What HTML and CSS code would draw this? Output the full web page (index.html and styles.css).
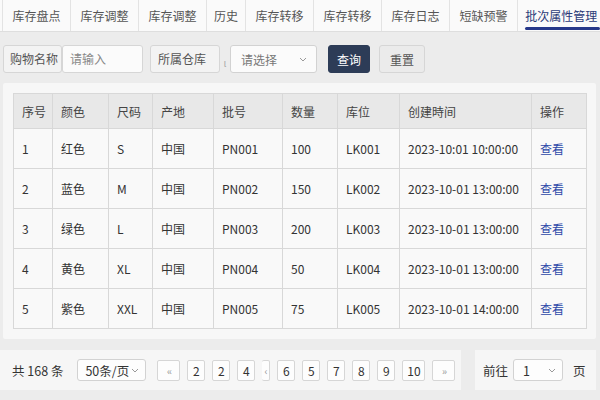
FILE: index.html
```html
<!DOCTYPE html>
<html lang="zh">
<head>
<meta charset="utf-8">
<title>批次属性管理</title>
<link rel="stylesheet" href="styles.css">
</head>
<body>
<div class="tabs">
  <div class="tab">库存盘点</div>
  <div class="tab">库存调整</div>
  <div class="tab">库存调整</div>
  <div class="tab tab-short">历史</div>
  <div class="tab">库存转移</div>
  <div class="tab">库存转移</div>
  <div class="tab">库存日志</div>
  <div class="tab">短缺预警</div>
  <div class="tab tab-active">批次属性管理</div>
</div>

<div class="filters">
  <div class="label label-name">购物名称</div>
  <div class="input">请输入</div>
  <div class="label label-wh">所属仓库</div>
  <span class="tick">ι</span>
  <div class="select select-wh">请选择<svg class="chev" width="8" height="5" viewBox="0 0 8 5"><path d="M1 1l3 3 3-3" fill="none" stroke="#999" stroke-width="1"/></svg></div>
  <button class="btn btn-primary">查询</button>
  <button class="btn btn-plain">重置</button>
</div>

<div class="card">
  <table class="grid">
    <colgroup>
      <col style="width:39px"><col style="width:56px"><col style="width:44px"><col style="width:61px"><col style="width:69px"><col style="width:55px"><col style="width:62px"><col style="width:132px"><col style="width:55px">
    </colgroup>
    <thead>
      <tr><th>序号</th><th>颜色</th><th>尺码</th><th>产地</th><th>批号</th><th>数量</th><th>库位</th><th>创建時间</th><th>操作</th></tr>
    </thead>
    <tbody>
      <tr><td>1</td><td>红色</td><td>S</td><td>中国</td><td>PN001</td><td>100</td><td>LK001</td><td>2023-10:01 10:00:00</td><td><a class="link">查看</a></td></tr>
      <tr><td>2</td><td>蓝色</td><td>M</td><td>中国</td><td>PN002</td><td>150</td><td>LK002</td><td>2023-10-01 13:00:00</td><td><a class="link">查看</a></td></tr>
      <tr><td>3</td><td>绿色</td><td>L</td><td>中国</td><td>PN003</td><td>200</td><td>LK003</td><td>2023-10-01 13:00:00</td><td><a class="link">查看</a></td></tr>
      <tr><td>4</td><td>黄色</td><td>XL</td><td>中国</td><td>PN004</td><td>50</td><td>LK004</td><td>2023-10-01 13:00:00</td><td><a class="link">查看</a></td></tr>
      <tr><td>5</td><td>紫色</td><td>XXL</td><td>中国</td><td>PN005</td><td>75</td><td>LK005</td><td>2023-10-01 14:00:00</td><td><a class="link">查看</a></td></tr>
    </tbody>
  </table>
</div>

<div class="pager">
  <div class="pager-main">
    <span class="total">共 168 条</span>
    <div class="select select-size">50条/页<svg class="chev" width="8" height="5" viewBox="0 0 8 5"><path d="M1 1l3 3 3-3" fill="none" stroke="#999" stroke-width="1"/></svg></div>
    <div class="pages">
      <span class="pg pg-wide pg-arrow">‹‹</span>
      <span class="pg">2</span>
      <span class="pg">2</span>
      <span class="pg">4</span>
      <span class="pg pg-narrow">‹</span>
      <span class="pg">6</span>
      <span class="pg">5</span>
      <span class="pg">7</span>
      <span class="pg">8</span>
      <span class="pg">9</span>
      <span class="pg pg-wide">10</span>
      <span class="pg pg-wide pg-arrow">››</span>
    </div>
  </div>
  <div class="pager-jump">
    <span>前往</span>
    <div class="select select-page">1<svg class="chev" width="8" height="5" viewBox="0 0 8 5"><path d="M1 1l3 3 3-3" fill="none" stroke="#999" stroke-width="1"/></svg></div>
    <span>页</span>
  </div>
</div>
</body>
</html>
```

FILE: styles.css
```css
* { box-sizing: border-box; }
html, body { margin: 0; padding: 0; }
body {
  width: 600px;
  height: 400px;
  overflow: hidden;
  background: #ececec;
  font-family: "Noto Sans CJK SC", "Noto Sans", sans-serif;
  font-size: 12px;
  color: #333;
}

/* tabs */
.tabs {
  display: flex;
  height: 32px;
  background: #fafafa;
  border-bottom: 1px solid #dedede;
  padding-left: 2px;
}
.tab {
  position: relative;
  padding: 0 9.5px;
  line-height: 31px;
  border-right: 1px solid #e3e3e3;
  color: #555;
  white-space: nowrap;
}
.tab:first-child { border-left: 1px solid #e3e3e3; }
.tab-short { padding: 0 7px; }
.tab-active {
  padding: 0 5px 0 7px;
  color: #2b3a78;
  border-right: none;
}
.tab-active::after {
  content: "";
  position: absolute;
  left: 7px;
  right: 2px;
  bottom: 1px;
  height: 3px;
  border-radius: 2px;
  background: #26388a;
}

/* filters */
.filters {
  display: flex;
  align-items: center;
  height: 28px;
  margin-top: 13px;
  padding-left: 3px;
}
.label {
  height: 28px;
  line-height: 26px;
  background: #f3f3f3;
  border: 1px solid #d6d6d6;
  border-radius: 3px;
  color: #555;
}
.label-name { width: 59px; padding-left: 6px; }
.label-wh { width: 70px; padding-left: 7px; margin-left: 7px; }
.input {
  width: 81px;
  height: 28px;
  line-height: 26px;
  padding-left: 7px;
  background: #fbfbfb;
  border: 1px solid #d6d6d6;
  border-radius: 3px;
  color: #888;
}
.tick {
  width: 10px;
  text-align: center;
  font-size: 10px;
  color: #aaa;
  padding-top: 6px;
}
.select {
  display: flex;
  align-items: center;
  justify-content: space-between;
  background: #fbfbfb;
  border: 1px solid #d2d2d2;
  border-radius: 3px;
}
.select-wh {
  width: 87px;
  height: 28px;
  padding: 0 9px 0 10px;
  color: #777;
}
.chev { display: block; }
.btn {
  height: 28px;
  border-radius: 3px;
  font-family: inherit;
  font-size: 12px;
  padding: 0;
}
.btn-primary {
  width: 42px;
  margin-left: 11px;
  background: #2d3c57;
  border: 1px solid #2d3c57;
  color: #fff;
}
.btn-plain {
  width: 46px;
  margin-left: 9px;
  background: #ebebeb;
  border: 1px solid #d6d6d6;
  color: #555;
}

/* card / table */
.card {
  margin: 10px 4px 0 3px;
  padding: 10px;
  background: #f7f7f7;
  border-radius: 2px;
}
.grid {
  width: 573px;
  border-collapse: collapse;
  table-layout: fixed;
}
.grid th, .grid td {
  border: 1px solid #d8d8d8;
  text-align: left;
  padding: 0 0 0 8px;
  font-weight: normal;
  white-space: nowrap;
}
.grid th {
  height: 35px;
  background: #e8e8e8;
  color: #444;
}
.grid td {
  height: 40px;
  background: #f9f9f9;
  color: #333;
}
.link { color: #2d48a8; }

/* pager */
.pager {
  display: flex;
  margin-top: 11px;
  height: 40px;
}
.pager-main {
  display: flex;
  align-items: center;
  width: 461px;
  background: #f6f6f6;
  padding-left: 12px;
}
.total { font-size: 12.5px; color: #333; }
.select-size {
  width: 69px;
  height: 22px;
  margin-left: 14px;
  padding: 0 6px 0 7px;
  font-size: 12.5px;
  color: #333;
  background: #fdfdfd;
}
.pages {
  display: flex;
  align-items: center;
  gap: 7px;
  margin-left: 11px;
}
.pg {
  width: 18px;
  height: 21px;
  line-height: 19px;
  text-align: center;
  background: #fdfdfd;
  border: 1px solid #d6d6d6;
  border-radius: 2px;
  color: #333;
  font-size: 12px;
}
.pg-wide { width: 23px; }
.pg-narrow { width: 8px; border-left: none; color: #999; font-size: 10px; }
.pg-arrow { color: #999; font-size: 10px; letter-spacing: -1px; }
.pager-jump {
  display: flex;
  align-items: center;
  margin-left: 14px;
  width: 121px;
  background: #f6f6f6;
  padding-left: 8px;
  font-size: 12.5px;
  color: #333;
}
.select-page {
  width: 50px;
  height: 22px;
  margin: 0 10px 0 5px;
  padding: 0 6px 0 9px;
  background: #fdfdfd;
}
```
